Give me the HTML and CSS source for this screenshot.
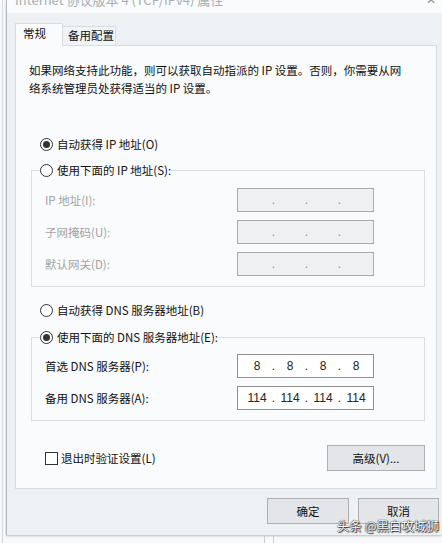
FILE: index.html
```
<!doctype html>
<html lang="zh-CN">
	<head>
		<meta charset="utf-8">
		<title>Internet 协议版本 4 (TCP/IPv4) 属性</title>
		<link rel="stylesheet" href="styles.css">
	</head>
	<body>
<div class="frame">
	<div class="dialog">
		<div class="titlebar">
			<span class="title">Internet 协议版本 4 (TCP/IPv4) 属性</span>
			<span class="close">✕</span>
		</div>

		<div class="tabs">
			<div class="tab active">常规</div>
			<div class="tab">备用配置</div>
		</div>

		<div class="panel">
			<p class="intro">如果网络支持此功能，则可以获取自动指派的 IP 设置。否则，你需要从网<br>络系统管理员处获得适当的 IP 设置。</p>

			<label class="choice top-choice"><span class="radio checked"></span>自动获得 IP 地址(O)</label>

			<fieldset class="group">
				<legend><label class="choice"><span class="radio"></span>使用下面的 IP 地址(S):</label></legend>
				<div class="rows">
					<div class="row off">
						<span class="field-label">IP 地址(I):</span>
						<div class="ip"><span></span><i>.</i><span></span><i>.</i><span></span><i>.</i><span></span></div>
					</div>
					<div class="row off">
						<span class="field-label">子网掩码(U):</span>
						<div class="ip"><span></span><i>.</i><span></span><i>.</i><span></span><i>.</i><span></span></div>
					</div>
					<div class="row off">
						<span class="field-label">默认网关(D):</span>
						<div class="ip"><span></span><i>.</i><span></span><i>.</i><span></span><i>.</i><span></span></div>
					</div>
				</div>
			</fieldset>

			<label class="choice dns-choice"><span class="radio"></span>自动获得 DNS 服务器地址(B)</label>

			<fieldset class="group dns">
				<legend><label class="choice"><span class="radio checked"></span>使用下面的 DNS 服务器地址(E):</label></legend>
				<div class="rows">
					<div class="row">
						<span class="field-label">首选 DNS 服务器(P):</span>
						<div class="ip"><span>8</span><i>.</i><span>8</span><i>.</i><span>8</span><i>.</i><span>8</span></div>
					</div>
					<div class="row">
						<span class="field-label">备用 DNS 服务器(A):</span>
						<div class="ip"><span>114</span><i>.</i><span>114</span><i>.</i><span>114</span><i>.</i><span>114</span></div>
					</div>
				</div>
			</fieldset>

			<div class="bottom-row">
				<label class="choice check-choice"><span class="checkbox"></span>退出时验证设置(L)</label>
				<button class="btn advanced">高级(V)...</button>
			</div>
		</div>

		<div class="footer">
			<button class="btn ok">确定</button>
			<button class="btn cancel">取消</button>
		</div>
	</div>
	<div class="below"><span class="sep"></span></div>
</div>

<div class="watermark">头条 @黑白攻城狮</div>
	</body>
</html>
```

FILE: styles.css
```
body {
	margin: 0;
	padding-left: 2px;
	background-color: #f7f9fb;
	font-family: "Noto Sans CJK SC", "Liberation Sans", sans-serif;
	font-size: 11.5px;
	color: #111;
	overflow: hidden;
}

.frame {
	border-left: 1px solid #d6dadf;
	padding-left: 3px;
	height: 543px;
}

.dialog {
	height: 535px;
	background-color: #eef1f4;
	border-left: 1px solid #b4bac0;
	box-shadow: 0 1px 2px rgba(0, 0, 0, 0.25);
}

/* title bar, cut off at the top of the shot */
.titlebar {
	height: 13px;
	background-color: #f9fbfc;
	overflow: hidden;
	display: flex;
	justify-content: space-between;
}

.title {
	margin: -9px 0 0 8px;
	font-size: 13px;
	line-height: 18px;
	color: #a9aeb4;
	white-space: nowrap;
}

.close {
	margin: -10px 6px 0 0;
	font-size: 12px;
	line-height: 18px;
	color: #8c9196;
}

/* tabs */
.tabs {
	height: 32px;
	box-sizing: border-box;
	padding-left: 8px;
	display: flex;
	align-items: flex-end;
}

.tab {
	box-sizing: border-box;
	height: 19px;
	width: 53px;
	padding-left: 5px;
	line-height: 16px;
	background-color: #f1f4f7;
	border: 1px solid #d8dce0;
	border-left: none;
	border-bottom: none;
	white-space: nowrap;
}

.tab.active {
	height: 23px;
	width: 48px;
	padding-left: 7px;
	line-height: 18px;
	margin-bottom: -1px;
	position: relative;
	z-index: 1;
	background-color: #f9fbfd;
	border-left: 1px solid #d8dce0;
}

/* general page */
.panel {
	box-sizing: border-box;
	height: 444px;
	width: 422px;
	margin-left: 8px;
	background-color: #f9fbfd;
	border: 1px solid #d8dce0;
}

.intro {
	margin: 15px 0 0 13px;
	line-height: 18px;
	white-space: nowrap;
}

.choice {
	display: flex;
	align-items: center;
	gap: 4px;
	height: 18px;
	line-height: 18px;
	white-space: nowrap;
}

.top-choice {
	margin: 38px 0 0 24px;
}

.dns-choice {
	margin: 14px 0 0 24px;
}

.radio {
	box-sizing: border-box;
	width: 13px;
	height: 13px;
	border: 1px solid #333;
	border-radius: 50%;
	background-color: #fff;
	display: flex;
	align-items: center;
	justify-content: center;
}

.radio.checked::after {
	content: "";
	width: 7px;
	height: 7px;
	border-radius: 50%;
	background-color: #333;
}

.checkbox {
	box-sizing: border-box;
	width: 13px;
	height: 13px;
	border: 1px solid #333;
	background-color: #fff;
}

.group {
	box-sizing: border-box;
	width: 394px;
	margin: 8px 0 0 15px;
	padding: 9px 8px 10px;
	border: 1px solid #dadde1;
	min-width: 0;
}

.group.dns {
	margin-top: 9px;
	padding-top: 8px;
}

.group legend {
	padding: 0;
	margin: 0;
}

.rows {
	display: grid;
	gap: 8px;
}

.row {
	display: flex;
	align-items: center;
	height: 24px;
}

.field-label {
	width: 197px;
	box-sizing: border-box;
	padding-left: 5px;
	white-space: nowrap;
}

.row.off .field-label {
	color: #a3a3a3;
}

.ip {
	box-sizing: border-box;
	width: 137px;
	height: 24px;
	padding: 0 3px 0 5px;
	display: flex;
	align-items: center;
	background-color: #fff;
	border: 1px solid #8f8f8f;
	font-family: "Liberation Sans", sans-serif;
	font-size: 12px;
	color: #222;
}

.ip span {
	width: 28px;
	text-align: center;
}

.ip i {
	font-style: normal;
	width: 5px;
	text-align: center;
}

.row.off .ip {
	background-color: #eef0f2;
	border-color: #a9abad;
	color: #8d8d8d;
}

.bottom-row {
	display: flex;
	align-items: center;
	height: 26px;
	margin-top: 24px;
}

.check-choice {
	margin-left: 29px;
	gap: 3px;
}

.btn {
	box-sizing: border-box;
	height: 26px;
	padding: 0;
	font-family: inherit;
	font-size: 11.5px;
	color: #111;
	background-color: #e3e5e8;
	border: 1px solid #adafb2;
}

.advanced {
	width: 98px;
	margin: 0 11px 0 auto;
}

/* dialog buttons */
.footer {
	height: 46px;
	box-sizing: border-box;
	padding: 9px 3px 0 0;
	display: flex;
	justify-content: flex-end;
	gap: 9px;
}

.ok {
	width: 82px;
}

.cancel {
	width: 81px;
}

.below {
	height: 8px;
}

.sep {
	display: block;
	width: 8px;
	height: 8px;
	margin-left: 258px;
	border-left: 1px solid #c9cdd1;
	border-right: 1px solid #c9cdd1;
}

.watermark {
	position: absolute;
	right: 3px;
	top: 517px;
	font-size: 12.5px;
	line-height: 18px;
	color: #fff;
	text-shadow: 0 0 1px #222, 0 0 1px #222, 1px 1px 1px #333;
	white-space: nowrap;
}
```
